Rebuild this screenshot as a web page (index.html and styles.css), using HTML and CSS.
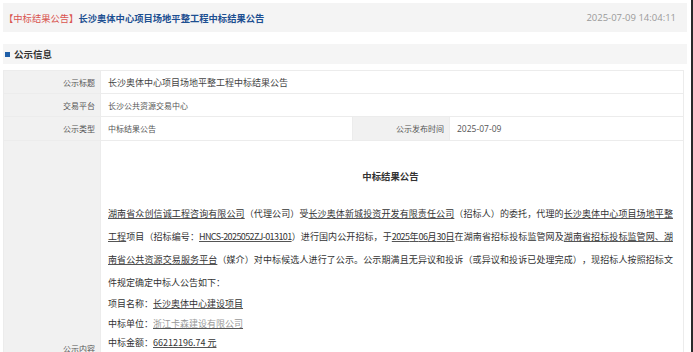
FILE: index.html
```html
<!DOCTYPE html>
<html lang="zh-CN">
<head>
    <meta charset="UTF-8">
    <meta name="viewport" content="width=device-width, initial-scale=1.0">
    <title>长沙奥体中心项目场地平整工程中标结果公告</title>
    <link rel="stylesheet" href="styles.css">
</head>
<body>
    <div class="page">
        <div class="notice-head">
            <h1 class="notice-title"><span class="tag">【中标结果公告】</span>长沙奥体中心项目场地平整工程中标结果公告</h1>
            <span class="notice-date">2025-07-09 14:04:11</span>
        </div>

        <div class="section-head">
            <span class="square"></span>
            <span>公示信息</span>
        </div>

        <table class="info">
            <colgroup>
                <col class="col-label">
                <col class="col-value">
                <col class="col-label">
                <col>
            </colgroup>
            <tr>
                <th>公示标题</th>
                <td colspan="3" class="big">长沙奥体中心项目场地平整工程中标结果公告</td>
            </tr>
            <tr>
                <th>交易平台</th>
                <td colspan="3">长沙公共资源交易中心</td>
            </tr>
            <tr class="tall">
                <th>公示类型</th>
                <td>中标结果公告</td>
                <th>公示发布时间</th>
                <td class="num">2025-07-09</td>
            </tr>
            <tr>
                <th>公示内容</th>
                <td colspan="3" class="content">
                    <h2>中标结果公告</h2>
                    <p class="body-text"><u>湖南省众创信诚工程咨询有限公司</u>（代理公司）受<u>长沙奥体新城投资开发有限责任公司</u>（招标人）的委托，代理的<u>长沙奥体中心项目场地平整工程</u>项目（招标编号：<u class="latin">HNCS-2025052ZJ-013101</u>）进行国内公开招标，于<u><span class="latin">2025</span>年<span class="latin">06</span>月<span class="latin">30</span>日</u>在湖南省招标投标监管网及<u>湖南省招标投标监管网、湖南省公共资源交易服务平台</u>（媒介）对中标候选人进行了公示。公示期满且无异议和投诉（或异议和投诉已处理完成），现招标人按照招标文件规定确定中标人公告如下：</p>
                    <p class="item">项目名称：<u>长沙奥体中心建设项目</u></p>
                    <p class="item">中标单位：<u class="faint">浙江卡森建设有限公司</u></p>
                    <p class="item">中标金额：<u>66212196.74 元</u></p>
                </td>
            </tr>
        </table>
    </div>
</body>
</html>
```

FILE: styles.css
```css
* {
    box-sizing: border-box;
}

body {
    margin: 0;
    background: #ffffff;
    font-family: "Noto Sans CJK SC", "Noto Sans", sans-serif;
    color: #444444;
    overflow: hidden;
}

.page {
    width: 693px;
    min-height: 100vh;
    padding: 3px 0 0 3px;
    border-right: 2px solid #2a2a2a;
}

.notice-head {
    width: 684px;
    height: 29px;
    background: #f4f4f4;
    display: flex;
    align-items: center;
    justify-content: space-between;
    padding: 0 11px 0 1px;
}

.notice-title {
    margin: 0;
    font-size: 9.3px;
    font-weight: bold;
    color: #1d4f91;
}

.tag {
    color: #d9534f;
    font-weight: normal;
}

.notice-date {
    font-family: "Open Sans", sans-serif;
    font-size: 9.5px;
    color: #9a9a9a;
}

.section-head {
    width: 684px;
    height: 20px;
    margin-top: 12px;
    background: #f5f5f5;
    display: flex;
    align-items: center;
    gap: 4px;
    padding-left: 2px;
    font-size: 9.5px;
    font-weight: bold;
    color: #333333;
}

.square {
    width: 5px;
    height: 5px;
    background: #1f5fa8;
}

.info {
    width: 681px;
    margin-top: 6px;
    border-collapse: collapse;
    border: 1px solid #ececec;
    font-size: 8px;
}

.col-label {
    width: 97px;
}

.col-value {
    width: 252px;
}

.info th,
.info td {
    border: 1px solid #ececec;
    height: 23px;
    padding: 0 7px;
}

.info th {
    background: #f1f1f1;
    color: #555555;
    font-weight: normal;
    text-align: right;
    padding-right: 5px;
}

.info td {
    color: #555555;
}

.info .tall th,
.info .tall td {
    height: 24px;
}

.info .big {
    font-size: 9px;
    color: #444444;
}

.info .num {
    font-family: "Open Sans", sans-serif;
    font-size: 8.5px;
}

.info .content {
    padding: 25px 10px 204px 7px;
    vertical-align: top;
    color: #333333;
}

.content h2 {
    margin: 0 0 16px;
    font-size: 9.4px;
    line-height: 20px;
    text-align: center;
    color: #333333;
}

.body-text {
    margin: 0;
    font-size: 9px;
    line-height: 23px;
    text-align: justify;
    text-spacing-trim: space-all;
}

.latin {
    letter-spacing: -0.6px;
}

.item {
    margin: 0;
    font-size: 9px;
    line-height: 19.5px;
}

.content u {
    text-decoration-color: #555555;
}

.content .faint {
    color: #999999;
}
```
